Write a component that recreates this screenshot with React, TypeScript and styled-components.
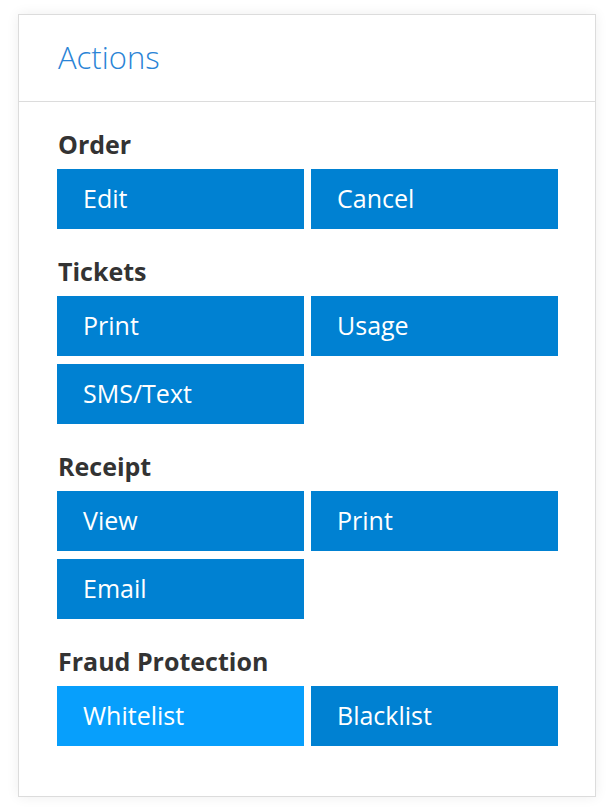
import React from 'react';
import styled, { createGlobalStyle } from 'styled-components';

const Global = createGlobalStyle`
    body {
        margin: 0;
        background: #fff;
        font-family: 'Open Sans', 'Noto Sans', sans-serif;
    }
`;

const Page = styled.div`
    padding: 14px 16px 12px 18px;
`;

const Card = styled.div`
    width: 578px;
    box-sizing: border-box;
    background: #fff;
    border: 1px solid #dcdcdc;
    box-shadow: 0 0 12px rgba(0, 0, 0, 0.07);
`;

const Header = styled.div`
    height: 86px;
    padding: 0 39px 2px;
    box-sizing: border-box;
    border-bottom: 1px solid #dcdcdc;
    display: flex;
    align-items: center;
    height: 87px;
`;

const Title = styled.h2`
    margin: 0;
    font-size: 31px;
    font-weight: 300;
    line-height: 40px;
    color: #2a84d6;
`;

const Body = styled.div`
    padding: 28px 37px 50px 38px;
    display: flex;
    flex-direction: column;
    gap: 28px;
`;

const Section = styled.section`
    display: flex;
    flex-direction: column;
    gap: 10px;
`;

const Heading = styled.h3`
    margin: 0;
    padding-left: 1px;
    font-size: 25px;
    font-weight: 700;
    line-height: 29px;
    color: #333;
`;

const Grid = styled.div`
    display: grid;
    grid-template-columns: 247px 247px;
    column-gap: 7px;
    row-gap: 8px;
`;

const ActionButton = styled.button<{ $active?: boolean }>`
    height: 60px;
    padding: 0 26px 2px;
    border: none;
    border-radius: 0;
    text-align: left;
    font-family: 'Open Sans', 'Noto Sans', sans-serif;
    font-size: 25px;
    font-weight: 400;
    line-height: 58px;
    color: #fff;
    background: ${(p) => (p.$active ? '#079ffc' : '#0081d2')};
    cursor: pointer;
`;

const sections = [
    { title: 'Order', items: ['Edit', 'Cancel'] },
    { title: 'Tickets', items: ['Print', 'Usage', 'SMS/Text'] },
    { title: 'Receipt', items: ['View', 'Print', 'Email'] },
    { title: 'Fraud Protection', items: ['Whitelist', 'Blacklist'], active: 'Whitelist' },
];

const App = () => (
    <Page>
        <Global />
        <Card>
            <Header>
                <Title>Actions</Title>
            </Header>
            <Body>
                {sections.map((s) => (
                    <Section key={s.title}>
                        <Heading>{s.title}</Heading>
                        <Grid>
                            {s.items.map((item) => (
                                <ActionButton key={item} $active={s.active === item}>
                                    {item}
                                </ActionButton>
                            ))}
                        </Grid>
                    </Section>
                ))}
            </Body>
        </Card>
    </Page>
);

export default App;
